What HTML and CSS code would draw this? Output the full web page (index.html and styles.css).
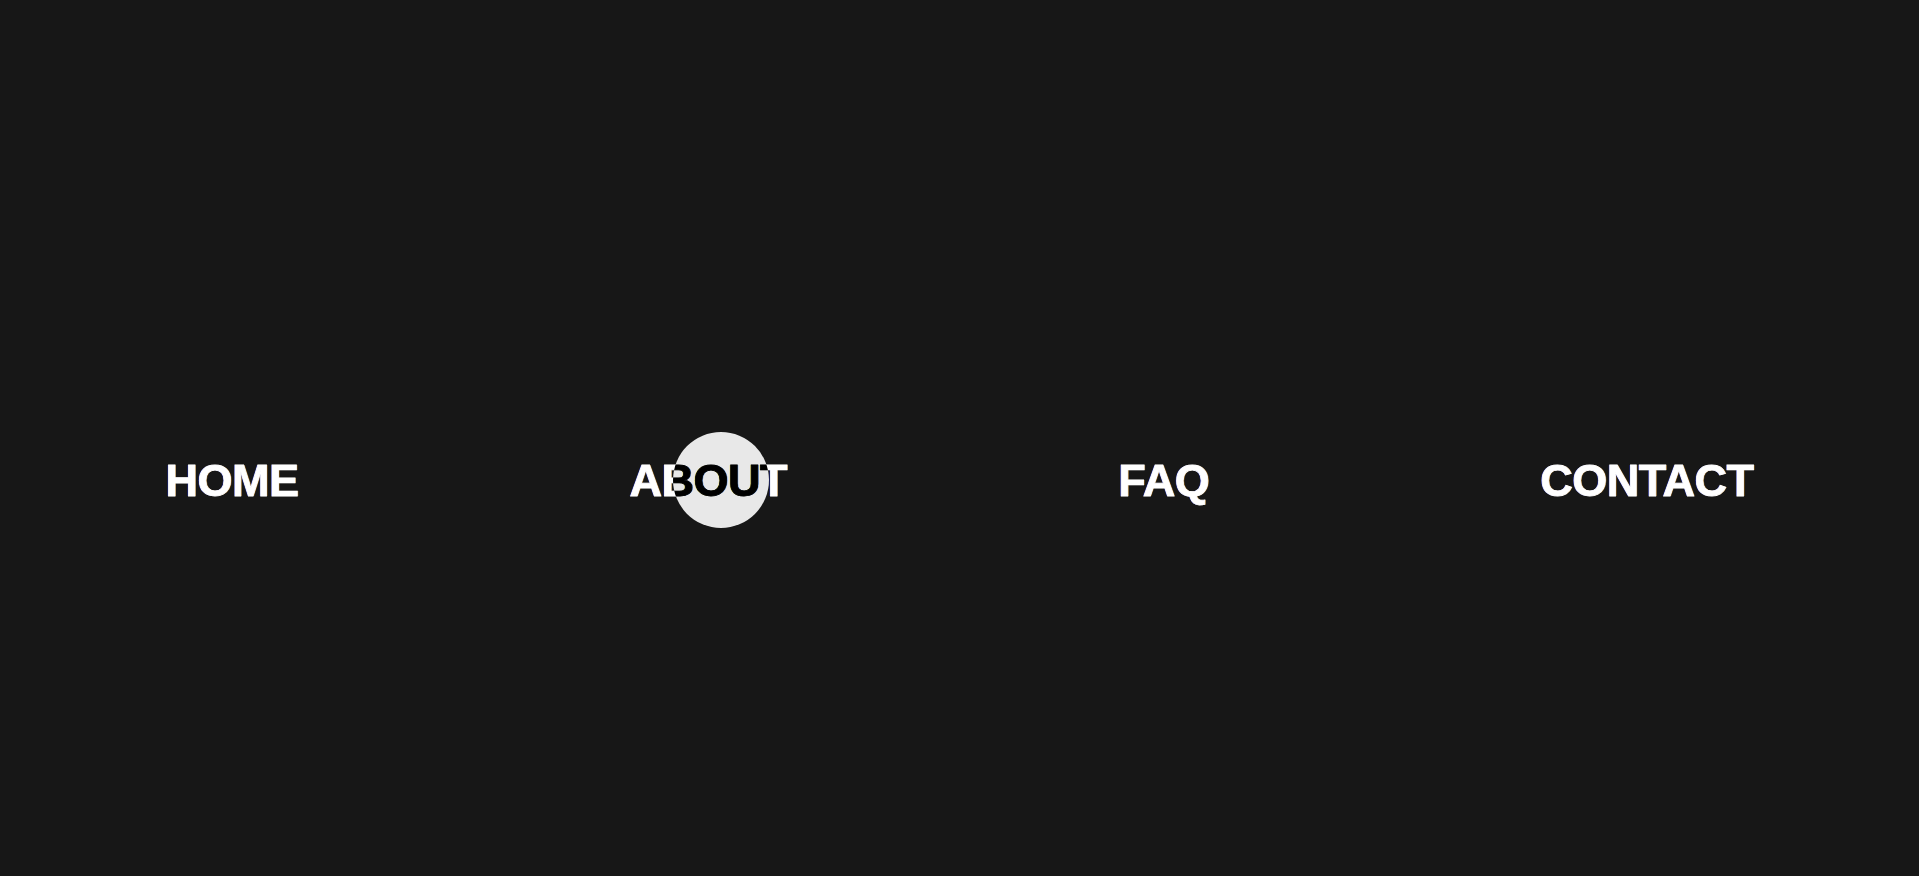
FILE: index.html
```html
<!DOCTYPE html>
<html>
<head>
<meta charset="utf-8">
<link rel="stylesheet" href="styles.css">
</head>
<body>
<div class="page">
  <nav class="nav">
    <a class="nav-link" href="#">HOME</a>
    <a class="nav-link" href="#">ABOUT</a>
    <a class="nav-link" href="#">FAQ</a>
    <a class="nav-link" href="#">CONTACT</a>
  </nav>
  <div class="cursor"></div>
</div>
</body>
</html>
```
FILE: styles.css
```css
html, body {
  margin: 0;
  padding: 0;
  background: #171717;
}
.page {
  position: relative;
  height: 876px;
  overflow: hidden;
  background: #171717;
}
.nav {
  display: flex;
  justify-content: space-around;
  padding-top: 458px;
}
.nav-link {
  font-family: "Liberation Sans", Arial, sans-serif;
  font-weight: 700;
  font-size: 45px;
  line-height: 45px;
  letter-spacing: -0.5px;
  color: #ffffff;
  text-decoration: none;
  -webkit-text-stroke: 0.8px #ffffff;
  text-shadow: -1px 0 rgba(40, 60, 255, 0.55), 1px 0 rgba(255, 170, 40, 0.55);
}
.cursor {
  position: absolute;
  left: 673px;
  top: 432px;
  width: 96px;
  height: 96px;
  border-radius: 50%;
  background: #ffffff;
  mix-blend-mode: difference;
  pointer-events: none;
}
```
